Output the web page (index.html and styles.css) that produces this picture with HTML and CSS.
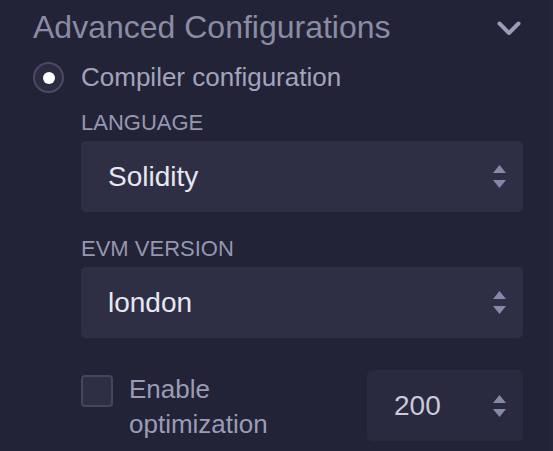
FILE: index.html
```html
<!DOCTYPE html>
<html>
<head>
<meta charset="utf-8">
<link rel="stylesheet" href="styles.css">
</head>
<body>
<div class="panel">
  <div class="header">
    <h2 class="title">Advanced Configurations</h2>
    <svg class="chevron" width="24" height="15" viewBox="0 0 24 15"><path d="M2.5 2.5 L12 12 L21.5 2.5" fill="none" stroke="#9a9cba" stroke-width="4" stroke-linecap="round" stroke-linejoin="round"/></svg>
  </div>
  <div class="radio-row">
    <span class="radio"><span class="dot"></span></span>
    <span class="radio-label">Compiler configuration</span>
  </div>
  <div class="fields">
    <div class="field">
      <div class="label">LANGUAGE</div>
      <div class="select">
        <span class="value">Solidity</span>
        <svg class="arrows" width="13" height="23" viewBox="0 0 13 23"><path d="M6.5 0 L13 8 L0 8 Z M0 15 L13 15 L6.5 23 Z" fill="#8589a8"/></svg>
      </div>
    </div>
    <div class="field">
      <div class="label">EVM VERSION</div>
      <div class="select">
        <span class="value">london</span>
        <svg class="arrows" width="13" height="23" viewBox="0 0 13 23"><path d="M6.5 0 L13 8 L0 8 Z M0 15 L13 15 L6.5 23 Z" fill="#8589a8"/></svg>
      </div>
    </div>
    <div class="opt-row">
      <div class="check-group">
        <span class="checkbox"></span>
        <span class="check-label">Enable<br>optimization</span>
      </div>
      <div class="number">
        <span class="num-value">200</span>
        <svg class="arrows" width="13" height="22" viewBox="0 0 13 22"><path d="M6.5 0 L13 8 L0 8 Z M0 14 L13 14 L6.5 22 Z" fill="#8589a8"/></svg>
      </div>
    </div>
  </div>
</div>
</body>
</html>
```
FILE: styles.css
```css
html, body {
  margin: 0;
  padding: 0;
  background: #222336;
  height: 100%;
  overflow: hidden;
}
body {
  font-family: "Liberation Sans", Arial, sans-serif;
  border-right: 3px solid #26273b;
  box-sizing: border-box;
}
.panel {
  padding: 9px 27px 0 33px;
}
.header {
  display: flex;
  justify-content: space-between;
  align-items: center;
  height: 37px;
}
.title {
  margin: 0;
  font-size: 32px;
  font-weight: normal;
  line-height: 37px;
  color: #8a8ca6;
}
.chevron {
  margin-right: 2px;
  margin-top: 1px;
}
.radio-row {
  display: flex;
  align-items: center;
  gap: 17px;
  margin-top: 16px;
  height: 31px;
}
.radio {
  width: 31px;
  height: 31px;
  box-sizing: border-box;
  border: 2px solid #4a4b63;
  border-radius: 50%;
  background: #2b2c42;
  display: flex;
  align-items: center;
  justify-content: center;
}
.dot {
  width: 12px;
  height: 12px;
  border-radius: 50%;
  background: #ffffff;
}
.radio-label {
  font-size: 26px;
  line-height: 31px;
  color: #a2a4be;
}
.fields {
  padding-left: 48px;
  margin-top: 17px;
}
.field {
  display: flex;
  flex-direction: column;
}
.field + .field {
  margin-top: 24px;
}
.label {
  font-size: 22px;
  line-height: 26px;
  color: #9597b0;
  margin-bottom: 5px;
}
.select {
  height: 71px;
  background: #2e2f45;
  border-radius: 5px;
  display: flex;
  align-items: center;
  justify-content: space-between;
  padding: 0 17px 0 27px;
}
.value {
  font-size: 28px;
  color: #e6e7f0;
}
.arrows {
  display: block;
}
.opt-row {
  display: flex;
  justify-content: space-between;
  align-items: flex-start;
  margin-top: 32px;
}
.check-group {
  display: flex;
  align-items: flex-start;
  gap: 16px;
}
.checkbox {
  width: 32px;
  height: 32px;
  box-sizing: border-box;
  border: 2px solid #45465d;
  border-radius: 4px;
  background: #2e2f45;
  margin-top: 5px;
}
.check-label {
  font-size: 26px;
  line-height: 35px;
  color: #9a9cb6;
  margin-top: 2px;
}
.number {
  width: 156px;
  height: 71px;
  box-sizing: border-box;
  background: #292a3f;
  border-radius: 5px;
  display: flex;
  align-items: center;
  justify-content: space-between;
  padding: 0 17px 0 27px;
}
.num-value {
  font-size: 28px;
  color: #c9cbdb;
}
```
